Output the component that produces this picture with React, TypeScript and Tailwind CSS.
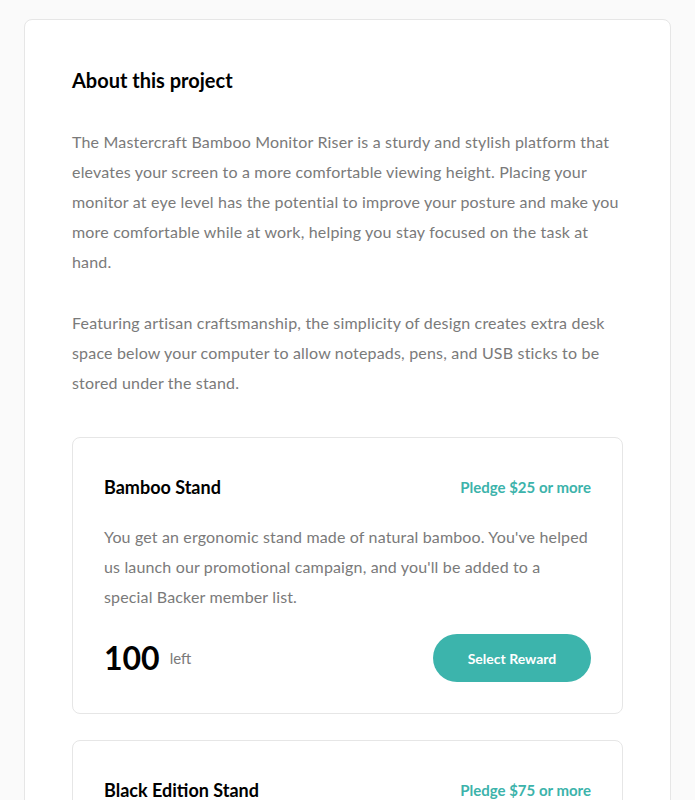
const rewards = [
  {
    title: "Bamboo Stand",
    pledge: "Pledge $25 or more",
    text: "You get an ergonomic stand made of natural bamboo. You've helped us launch our promotional campaign, and you'll be added to a special Backer member list.",
    left: 100,
  },
  {
    title: "Black Edition Stand",
    pledge: "Pledge $75 or more",
    text: "You get a Black Special Edition computer stand and a personal thank you. You'll be added to our Backer member list. Shipping is included.",
    left: 64,
  },
];

function RewardCard({ reward }: { reward: (typeof rewards)[number] }) {
  return (
    <div className="rounded-lg border border-[#e6e6e6] px-[31px] pt-[39px] pb-[31px]">
      <div className="flex items-center justify-between">
        <h3 className="text-[18px] font-bold leading-5 text-black">{reward.title}</h3>
        <span className="text-[15px] font-bold leading-5 text-[#3cb3ab]">{reward.pledge}</span>
      </div>
      <p className="mt-[25px] text-[16px] leading-[30px] tracking-[0.15px] text-[#7a7a7a]">
        {reward.text}
      </p>
      <div className="mt-[22px] flex items-center justify-between">
        <div className="flex items-center gap-[10px]">
          <span className="text-[32px] font-bold leading-none text-black">{reward.left}</span>
          <span className="text-[15px] text-[#7a7a7a]">left</span>
        </div>
        <button className="h-12 w-[158px] rounded-full bg-[#3cb4ac] text-[14px] font-bold text-white">
          Select Reward
        </button>
      </div>
    </div>
  );
}

export default function App() {
  return (
    <div className="min-h-screen bg-[#fafafa] px-6 pt-[19px] font-['Lato',sans-serif]">
      <section className="rounded-lg border border-[#e6e6e6] bg-white px-[47px] pt-[48px] pb-12">
        <h2 className="text-[20px] font-bold leading-6 text-black">About this project</h2>
        <div className="mt-[35px] space-y-[31px] text-[16px] leading-[30px] tracking-[0.18px] text-[#7a7a7a]">
          <p>
            The Mastercraft Bamboo Monitor Riser is a sturdy and stylish platform that elevates your
            screen to a more comfortable viewing height. Placing your monitor at eye level has the
            potential to improve your posture and make you more comfortable while at work, helping
            you stay focused on the task at hand.
          </p>
          <p>
            Featuring artisan craftsmanship, the simplicity of design creates extra desk space below
            your computer to allow notepads, pens, and USB sticks to be stored under the stand.
          </p>
        </div>
        <div className="mt-[39px] space-y-[26px]">
          {rewards.map((r) => (
            <RewardCard key={r.title} reward={r} />
          ))}
        </div>
      </section>
    </div>
  );
}
